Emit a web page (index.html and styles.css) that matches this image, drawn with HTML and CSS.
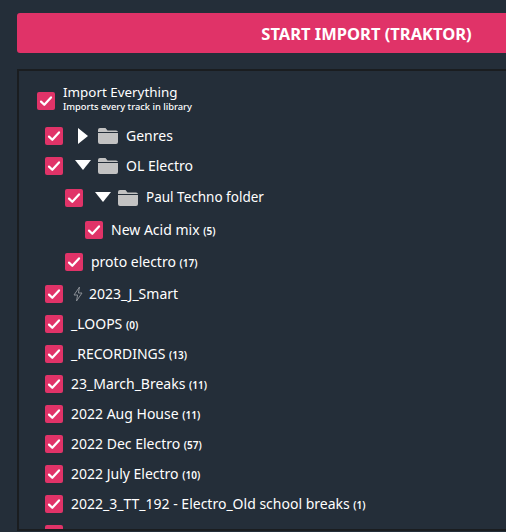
FILE: index.html
```html
<!DOCTYPE html>
<html lang="en">
<head>
    <meta charset="UTF-8">
    <meta name="viewport" content="width=device-width, initial-scale=1.0">
    <title>Import</title>
    <link rel="stylesheet" href="styles.css">
</head>
<body>
    <svg class="icon-defs" width="0" height="0">
        <symbol id="check" viewBox="0 0 18 18">
            <path d="M4 9.6l3.3 3.2L14 5.4" fill="none" stroke="#fff" stroke-width="2.2" stroke-linecap="round" stroke-linejoin="round"/>
        </symbol>
        <symbol id="folder" viewBox="0 0 20 16">
            <path d="M2 0h5.5l2 2.4H18a2 2 0 0 1 2 2V14a2 2 0 0 1-2 2H2a2 2 0 0 1-2-2V2a2 2 0 0 1 2-2z" fill="#c2c2c2"/>
            <path d="M0 4.5h20" stroke="#242e39" stroke-width="1"/>
        </symbol>
    </svg>
    <main class="page">
        <button class="start-btn" type="button">START IMPORT (TRAKTOR)</button>
        <section class="panel">
            <div class="row row-all">
                <span class="box"><svg><use href="#check"/></svg></span>
                <div class="all-text">
                    <div class="all-title">Import Everything</div>
                    <div class="all-sub">Imports every track in library</div>
                </div>
            </div>
            <div class="row">
                <span class="box"><svg><use href="#check"/></svg></span>
                <span class="arrow arrow-right"></span>
                <svg class="folder"><use href="#folder"/></svg>
                <span class="name">Genres</span>
            </div>
            <div class="row">
                <span class="box"><svg><use href="#check"/></svg></span>
                <span class="arrow arrow-down"></span>
                <svg class="folder"><use href="#folder"/></svg>
                <span class="name">OL Electro</span>
            </div>
            <div class="row indent-1 row-gap">
                <span class="box"><svg><use href="#check"/></svg></span>
                <span class="arrow arrow-down"></span>
                <svg class="folder"><use href="#folder"/></svg>
                <span class="name name-long">Paul Techno folder</span>
            </div>
            <div class="row indent-2 row-gap">
                <span class="box"><svg><use href="#check"/></svg></span>
                <span class="name">New Acid mix <small>(5)</small></span>
            </div>
            <div class="row indent-1 row-gap">
                <span class="box"><svg><use href="#check"/></svg></span>
                <span class="name">proto electro <small>(17)</small></span>
            </div>
            <div class="row row-gap">
                <span class="box"><svg><use href="#check"/></svg></span>
                <svg class="bolt" viewBox="0 0 12 16"><path d="M7.5 1L2 9h3.6L4.5 15 10 7H6.4z" fill="none" stroke="#8a8f96" stroke-width="1" stroke-linejoin="round"/></svg>
                <span class="name">2023_J_Smart</span>
            </div>
            <div class="row">
                <span class="box"><svg><use href="#check"/></svg></span>
                <span class="name">_LOOPS <small>(0)</small></span>
            </div>
            <div class="row">
                <span class="box"><svg><use href="#check"/></svg></span>
                <span class="name">_RECORDINGS <small>(13)</small></span>
            </div>
            <div class="row">
                <span class="box"><svg><use href="#check"/></svg></span>
                <span class="name">23_March_Breaks <small>(11)</small></span>
            </div>
            <div class="row">
                <span class="box"><svg><use href="#check"/></svg></span>
                <span class="name">2022 Aug House <small>(11)</small></span>
            </div>
            <div class="row">
                <span class="box"><svg><use href="#check"/></svg></span>
                <span class="name">2022 Dec Electro <small>(57)</small></span>
            </div>
            <div class="row">
                <span class="box"><svg><use href="#check"/></svg></span>
                <span class="name">2022 July Electro <small>(10)</small></span>
            </div>
            <div class="row">
                <span class="box"><svg><use href="#check"/></svg></span>
                <span class="name">2022_3_TT_192 - Electro_Old school breaks <small>(1)</small></span>
            </div>
            <div class="row">
                <span class="box"><svg><use href="#check"/></svg></span>
            </div>
        </section>
    </main>
</body>
</html>
```
FILE: styles.css
```css
html, body {
    height: 100%;
}

body {
    margin: 0;
    overflow: hidden;
    background-color: #242e39;
    color: #fff;
    font-family: "Noto Sans", "Open Sans", sans-serif;
    font-size: 14px;
}

.icon-defs {
    display: block;
    height: 0;
}

.page {
    width: 699px;
    padding: 13px 0 0 17px;
}

.start-btn {
    display: block;
    width: 100%;
    height: 40px;
    border: none;
    border-radius: 3px;
    background-color: #e03368;
    color: #fff;
    font-family: inherit;
    font-size: 16.5px;
    font-weight: 700;
}

.panel {
    height: 444px;
    margin-top: 16px;
    padding-top: 14px;
    border: 2px solid #1a1d20;
    overflow: hidden;
}

.row {
    display: flex;
    align-items: center;
    height: 30px;
    padding-left: 26px;
}

.row-gap {
    margin-top: 2px;
}

.indent-1 {
    padding-left: 46px;
}

.indent-2 {
    padding-left: 66px;
}

.row-all {
    height: 32px;
    padding-left: 18px;
    margin-bottom: 4px;
}

.box {
    flex: none;
    width: 18px;
    height: 18px;
    margin-right: 8px;
    border-radius: 2px;
    background-color: #e03368;
}

.box svg {
    display: block;
    width: 18px;
    height: 18px;
}

.all-text {
    margin-bottom: 6px;
}

.all-title {
    font-size: 13.4px;
    line-height: 18px;
}

.all-sub {
    font-size: 9.3px;
    line-height: 12px;
    font-weight: 500;
}

.arrow {
    flex: none;
    width: 0;
    height: 0;
}

.arrow-right {
    margin-left: 7px;
    margin-right: 10px;
    border-top: 8px solid transparent;
    border-bottom: 8px solid transparent;
    border-left: 10px solid #fff;
}

.arrow-down {
    margin-left: 4px;
    margin-right: 7px;
    border-left: 8px solid transparent;
    border-right: 8px solid transparent;
    border-top: 10px solid #fff;
    transform: translateY(-1px);
}

.folder {
    flex: none;
    width: 20px;
    height: 16px;
    margin-right: 8px;
}

.bolt {
    flex: none;
    width: 12px;
    height: 16px;
    margin-left: 1px;
    margin-right: 5px;
}

.name {
    margin-bottom: 2px;
    white-space: nowrap;
}

.name-long {
    font-size: 13.5px;
}

.name small {
    font-size: 10px;
    font-weight: 600;
}
```
